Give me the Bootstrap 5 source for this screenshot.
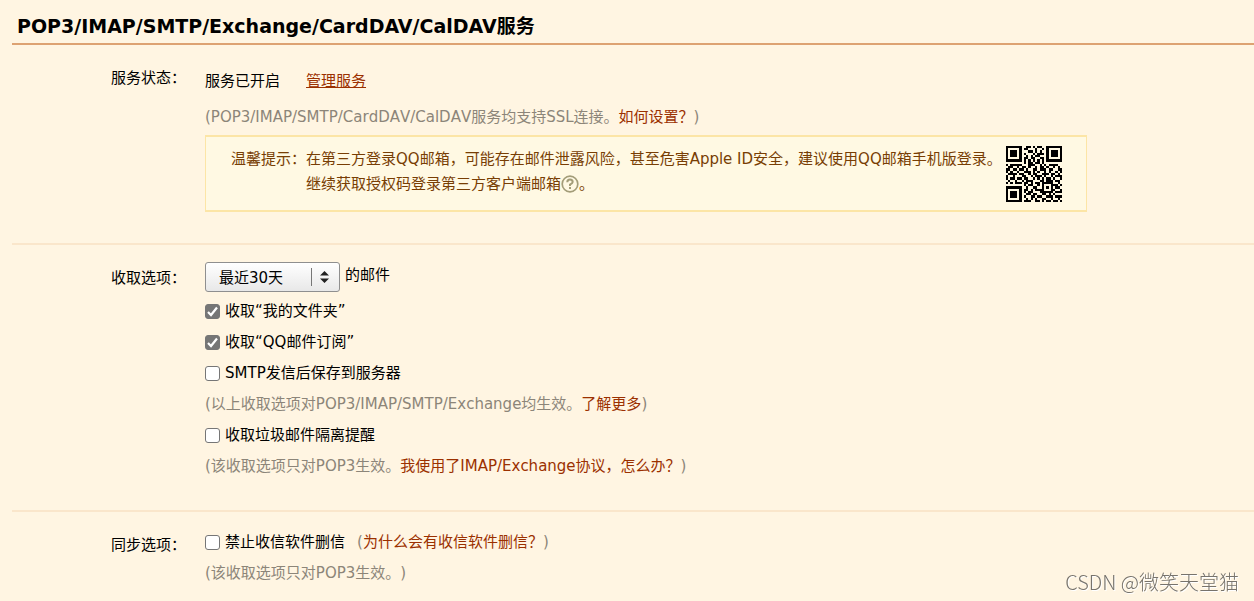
<!DOCTYPE html>
<html lang="zh-CN">
<head>
<meta charset="utf-8">
<meta name="viewport" content="width=device-width, initial-scale=1">
<title>POP3/IMAP/SMTP/Exchange/CardDAV/CalDAV服务</title>
<link href="https://cdn.jsdelivr.net/npm/bootstrap@5.3.0/dist/css/bootstrap.min.css" rel="stylesheet">
<style>
body{background:#fff5e2;color:#000;font:15px/25px "DejaVu Sans","Noto Sans CJK SC",sans-serif;font-kerning:none;text-spacing-trim:space-all}
a{color:#9b3000;text-decoration:none}
a:hover{text-decoration:underline}
.page-box{padding-left:12px}
.page-title{font-size:19px;line-height:26px;font-weight:700;font-kerning:normal;padding:13px 5px 4px;border-bottom:2px solid #dda272}
.opt-row + .opt-row{border-top:2px solid #fae6cb}
.opt-label{width:193px;padding:21px 0 0 99px}
.opt-state{padding:24px 0 31px}
.opt-body{padding:17px 0 28px}
.opt-sync{padding-top:15px}
.hint{color:#8c8579}
.manage{margin-left:26px;text-decoration:underline}
.hint-ssl{padding:11px 0 5px}
.tip{width:882px;max-width:100%;border:solid #fce5a6;border-width:2px 1px;background:#fff9e3;color:#783e04;padding:10px 24px 13px 25px}
.tip-mark{width:18px;height:18px;vertical-align:-4px}
.qr{width:56px;height:56px;margin:-1px 0 -6px}
.pick{width:135px}
.pick select{appearance:none;height:30px;border:1px solid #8f8f8f;border-radius:3px;background:linear-gradient(#fff,#e8e8e8);padding:2px 30px 0 13px;font:inherit;color:#000}
.pick svg{width:30px;height:30px;pointer-events:none}
.pick-unit{padding:1px 0 0 5px}
.tick{appearance:none;width:15px;height:15px;border:1px solid #767676;border-radius:3px;background:#fff}
.tick:checked{background:#767676 url("data:image/svg+xml,%3Csvg xmlns='http://www.w3.org/2000/svg' viewBox='0 0 13 13'%3E%3Cpath d='M2 7l3 3 6-7.500' fill='none' stroke='%23fff' stroke-width='2.200'/%3E%3C/svg%3E")}
.line{min-height:31px}
.line label{margin-left:5px}
.stamp{right:15px;bottom:4px;font:300 20px/30px "Noto Sans CJK SC",sans-serif;color:#77736c;text-shadow:1px 1px #fff}
</style>
</head>
<body>
<main class="page-box">
<h1 class="page-title m-0">POP3/IMAP/SMTP/Exchange/CardDAV/CalDAV服务</h1>
<section class="opt-row d-flex">
 <div class="opt-label flex-shrink-0">服务状态：</div>
 <div class="opt-state flex-grow-1">
  <div>服务已开启<a class="manage" href="#">管理服务</a></div>
  <div class="hint hint-ssl">(POP3/IMAP/SMTP/CardDAV/CalDAV服务均支持SSL连接。<a href="#">如何设置？</a>)</div>
  <div class="tip d-flex justify-content-between">
   <div class="d-flex"><span class="flex-shrink-0">温馨提示：</span><div>在第三方登录QQ邮箱，可能存在邮件泄露风险，甚至危害Apple ID安全，建议使用QQ邮箱手机版登录。<br>继续获取授权码登录第三方客户端邮箱<svg class="tip-mark" viewBox="0 0 18 18" fill="none" stroke="#a39d78"><circle cx="9" cy="9" r="7.800" stroke-width="1.700"/><path d="M6.300 7.200q0-2.700 2.700-2.700t2.700 2.500Q11.700 8.200 9 9.600V11M9 12v2" stroke-width="2"/></svg>。</div></div>
   <svg class="qr flex-shrink-0" viewBox="0 0 25 25" shape-rendering="crispEdges" role="img" aria-label="QQ邮箱手机版"><path id="qr-cells"/></svg>
  </div>
 </div>
</section>
<section class="opt-row d-flex">
 <div class="opt-label flex-shrink-0">收取选项：</div>
 <div class="opt-body flex-grow-1">
  <div class="d-flex align-items-start mb-1">
   <div class="pick position-relative">
    <select class="w-100" id="range" aria-label="收取范围"><option>最近30天</option><option>全部</option></select>
    <svg class="position-absolute top-0 end-0" viewBox="0 0 30 30"><path d="M1.500 6v18" stroke="#777"/><path d="M10 13.500l4.500-4.500 4.500 4.500zM10 16.500h9l-4.500 4.500z" fill="#222"/></svg>
   </div>
   <label class="pick-unit" for="range">的邮件</label>
  </div>
  <div class="line d-flex align-items-center"><input class="tick" type="checkbox" id="c1" checked><label for="c1">收取“我的文件夹”</label></div>
  <div class="line d-flex align-items-center"><input class="tick" type="checkbox" id="c2" checked><label for="c2">收取“QQ邮件订阅”</label></div>
  <div class="line d-flex align-items-center"><input class="tick" type="checkbox" id="c3"><label for="c3">SMTP发信后保存到服务器</label></div>
  <div class="line d-flex align-items-center hint">(以上收取选项对POP3/IMAP/SMTP/Exchange均生效。<a href="#">了解更多</a>)</div>
  <div class="line d-flex align-items-center"><input class="tick" type="checkbox" id="c4"><label for="c4">收取垃圾邮件隔离提醒</label></div>
  <div class="line d-flex align-items-center hint">(该收取选项只对POP3生效。<a href="#">我使用了IMAP/Exchange协议，怎么办？</a>)</div>
 </div>
</section>
<section class="opt-row d-flex">
 <div class="opt-label flex-shrink-0">同步选项：</div>
 <div class="opt-sync flex-grow-1">
  <div class="line d-flex align-items-center"><input class="tick" type="checkbox" id="c5"><label for="c5">禁止收信软件删信</label><span class="hint ms-2 ps-1">(<a href="#">为什么会有收信软件删信？</a>)</span></div>
  <div class="line d-flex align-items-center hint">(该收取选项只对POP3生效。<span>)</span></div>
 </div>
</section>
</main>
<div class="stamp position-fixed">CSDN @微笑天堂猫</div>
<script>
const cells = [
'1111111001101011001111111',
'1000001011000100101000001',
'1011101000110101001011101',
'1011101010001011101011101',
'1011101001010110001011101',
'1000001011011001101000001',
'1111111010101010101111111',
'0000000010110110100000000',
'1011111000111001010111100',
'0110010110100101101001010',
'1101101101001101110110011',
'1010010011101010010100101',
'0111101100101100111011010',
'1001000110010111010010111',
'1011011011001010101101001',
'0100100101110001101110110',
'1010111011010110111110010',
'0000000010110010100011101',
'1111111001001100101010110',
'1000001011010111100011001',
'1011101010110001111110111',
'1011101001101100110101000',
'1011101010011011001110111',
'1000001001010100110010010',
'1111111011100110101101101'];
document.getElementById('qr-cells').setAttribute('d', cells.map((r, y) =>
  [...r].map((c, x) => c === '1' ? `M${x} ${y}h1v1h-1z` : '').join('')).join(''));
</script>
<script src="https://cdn.jsdelivr.net/npm/bootstrap@5.3.0/dist/js/bootstrap.bundle.min.js"></script>
</body>
</html>
